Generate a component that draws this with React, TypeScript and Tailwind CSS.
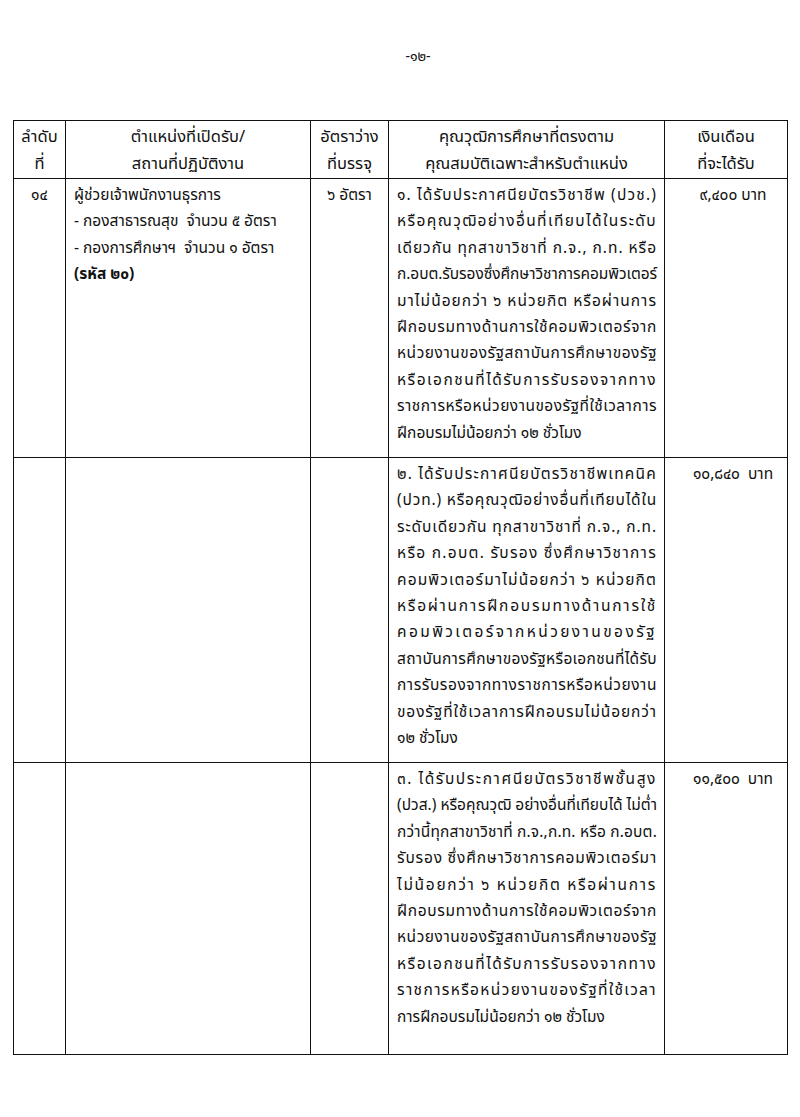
import { useLayoutEffect, useRef, useState } from 'react'

const rows = [
  {
    no: '๑๔',
    position: true,
    rate: '๖ อัตรา',
    salary: '๙,๔๐๐ บาท',
    lines: [
      '๑. ได้รับประกาศนียบัตรวิชาชีพ (ปวช.)',
      'หรือคุณวุฒิอย่างอื่นที่เทียบได้ในระดับ',
      'เดียวกัน ทุกสาขาวิชาที่ ก.จ., ก.ท. หรือ',
      'ก.อบต.รับรองซึ่งศึกษาวิชาการคอมพิวเตอร์',
      'มาไม่น้อยกว่า ๖ หน่วยกิต หรือผ่านการ',
      'ฝึกอบรมทางด้านการใช้คอมพิวเตอร์จาก',
      'หน่วยงานของรัฐสถาบันการศึกษาของรัฐ',
      'หรือเอกชนที่ได้รับการรับรองจากทาง',
      'ราชการหรือหน่วยงานของรัฐที่ใช้เวลาการ',
      'ฝึกอบรมไม่น้อยกว่า ๑๒ ชั่วโมง',
    ],
  },
  {
    no: '',
    position: false,
    rate: '',
    salary: '๑๐,๘๔๐  บาท',
    lines: [
      '๒. ได้รับประกาศนียบัตรวิชาชีพเทคนิค',
      '(ปวท.) หรือคุณวุฒิอย่างอื่นที่เทียบได้ใน',
      'ระดับเดียวกัน ทุกสาขาวิชาที่ ก.จ., ก.ท.',
      'หรือ ก.อบต. รับรอง ซึ่งศึกษาวิชาการ',
      'คอมพิวเตอร์มาไม่น้อยกว่า ๖ หน่วยกิต',
      'หรือผ่านการฝึกอบรมทางด้านการใช้',
      'คอมพิวเตอร์จากหน่วยงานของรัฐ',
      'สถาบันการศึกษาของรัฐหรือเอกชนที่ได้รับ',
      'การรับรองจากทางราชการหรือหน่วยงาน',
      'ของรัฐที่ใช้เวลาการฝึกอบรมไม่น้อยกว่า',
      '๑๒ ชั่วโมง',
    ],
  },
  {
    no: '',
    position: false,
    rate: '',
    salary: '๑๑,๕๐๐  บาท',
    lines: [
      '๓. ได้รับประกาศนียบัตรวิชาชีพชั้นสูง',
      '(ปวส.) หรือคุณวุฒิ อย่างอื่นที่เทียบได้ ไม่ต่ำ',
      'กว่านี้ทุกสาขาวิชาที่ ก.จ.,ก.ท. หรือ ก.อบต.',
      'รับรอง ซึ่งศึกษาวิชาการคอมพิวเตอร์มา',
      'ไม่น้อยกว่า ๖ หน่วยกิต หรือผ่านการ',
      'ฝึกอบรมทางด้านการใช้คอมพิวเตอร์จาก',
      'หน่วยงานของรัฐสถาบันการศึกษาของรัฐ',
      'หรือเอกชนที่ได้รับการรับรองจากทาง',
      'ราชการหรือหน่วยงานของรัฐที่ใช้เวลา',
      'การฝึกอบรมไม่น้อยกว่า ๑๒ ชั่วโมง',
    ],
  },
]

const heights = ['h-[279px]', 'h-[305px]', 'h-[292px]']

// stretches a line to the cell width, like the Thai distributed justify in the scan
function Line({ text, stretch }: { text: string; stretch: boolean }) {
  const ref = useRef<HTMLSpanElement>(null)
  const [ls, setLs] = useState(0)

  useLayoutEffect(() => {
    const measure = () => {
      const el = ref.current
      if (!el || !stretch || !el.parentElement) return
      const target = el.parentElement.clientWidth
      el.style.letterSpacing = '0px'
      const w0 = el.getBoundingClientRect().width
      el.style.letterSpacing = '1px'
      const w1 = el.getBoundingClientRect().width
      const per = w1 - w0
      const v = per > 0 ? (target - w0) / per : 0
      el.style.letterSpacing = v + 'px'
      setLs(v)
    }
    measure()
    document.fonts?.ready.then(measure)
  }, [text, stretch])

  return (
    <div>
      <span ref={ref} className="inline-block whitespace-nowrap" style={{ letterSpacing: ls + 'px' }}>
        {text}
      </span>
    </div>
  )
}

const cell = 'border border-[#111]'

export default function App() {
  return (
    <div className="w-[800px] min-h-[1117px] bg-white text-[#111] font-['Noto_Sans_Thai','Noto_Sans',sans-serif]">
      <div className="pt-[46px] text-center text-[14px] leading-[22px] pl-[36px]">-๑๒-</div>

      <table className="ml-[13px] mt-[52px] w-[774px] table-fixed border-collapse text-[15.5px] leading-[26.4px]">
        <colgroup>
          <col className="w-[52px]" />
          <col className="w-[245px]" />
          <col className="w-[78px]" />
          <col className="w-[276px]" />
          <col className="w-[123px]" />
        </colgroup>
        <thead>
          <tr className="h-[58px]">
            {[
              ['ลำดับ', 'ที่'],
              ['ตำแหน่งที่เปิดรับ/', 'สถานที่ปฏิบัติงาน'],
              ['อัตราว่าง', 'ที่บรรจุ'],
              ['คุณวุฒิการศึกษาที่ตรงตาม', 'คุณสมบัติเฉพาะสำหรับตำแหน่ง'],
              ['เงินเดือน', 'ที่จะได้รับ'],
            ].map((h, i) => (
              <th key={i} className={`${cell} font-normal text-center align-middle px-0.5 text-[16.5px] leading-[27px]`}>
                <div>{h[0]}</div>
                <div>{h[1]}</div>
              </th>
            ))}
          </tr>
        </thead>
        <tbody>
          {rows.map((r, i) => (
            <tr key={i} className={heights[i]}>
              <td className={`${cell} align-top text-center pt-[4px]`}>{r.no}</td>
              <td className={`${cell} align-top pt-[4px] px-[8px]`}>
                {r.position && (
                  <>
                    <div>ผู้ช่วยเจ้าพนักงานธุรการ</div>
                    <div className="whitespace-pre">- กองสาธารณสุข  จำนวน ๕ อัตรา</div>
                    <div className="whitespace-pre">- กองการศึกษาฯ  จำนวน ๑ อัตรา</div>
                    <div className="font-bold">(รหัส ๒๐)</div>
                  </>
                )}
              </td>
              <td className={`${cell} align-top text-center pt-[4px]`}>{r.rate}</td>
              <td className={`${cell} align-top pt-[4px] pl-[8px] pr-[7px]`}>
                {r.lines.map((l, j) => (
                  <Line key={j} text={l} stretch={j < r.lines.length - 1} />
                ))}
              </td>
              <td className={`${cell} align-top text-center pt-[4px] pl-[14px] whitespace-pre`}>{r.salary}</td>
            </tr>
          ))}
        </tbody>
      </table>
    </div>
  )
}
